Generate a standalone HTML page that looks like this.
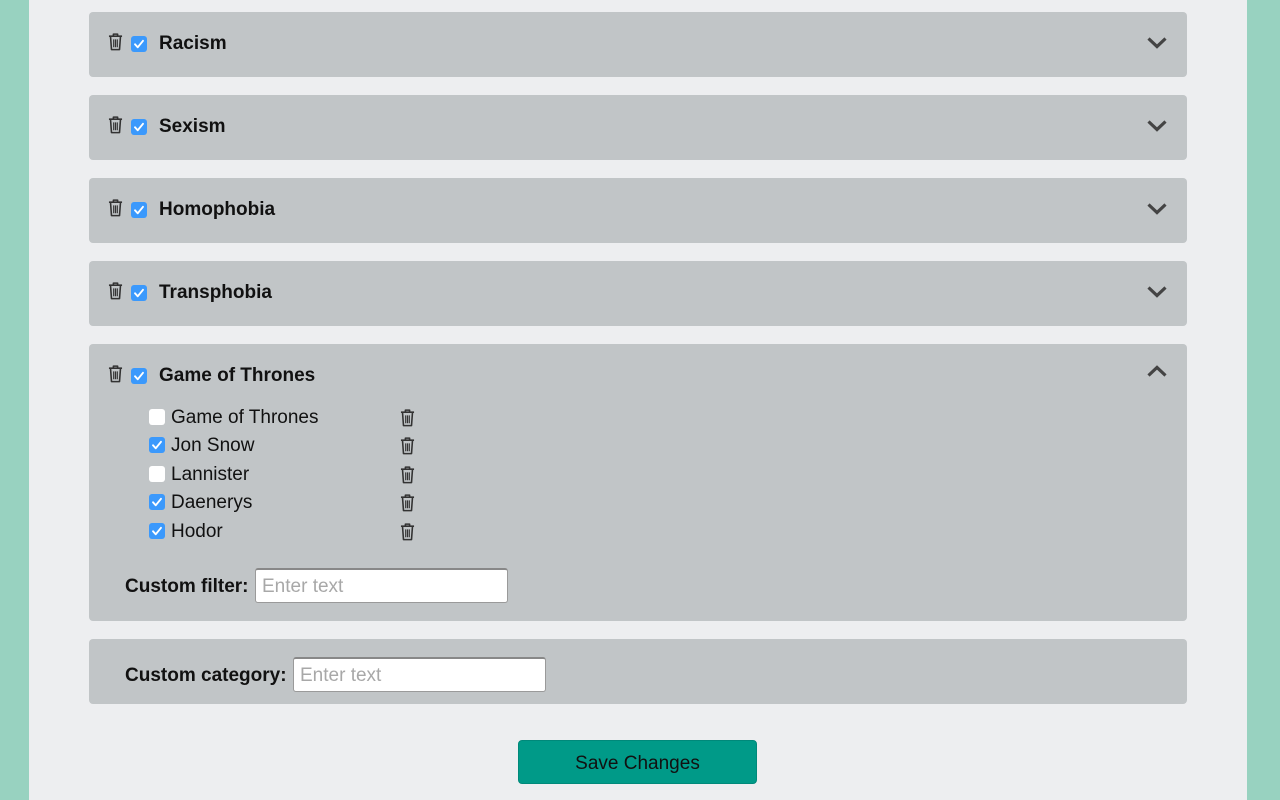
<!DOCTYPE html>
<html><head><meta charset="utf-8"><style>
*{box-sizing:border-box;margin:0;padding:0}
body{width:1280px;height:800px;background:#98d2c0;font-family:"Liberation Sans",Helvetica,Arial,sans-serif;position:relative;overflow:hidden;color:#111}
.page{position:absolute;left:29px;top:0;width:1218px;height:800px;background:#edeef0}
.panel{position:absolute;left:89px;width:1098px;background:#c1c5c7;border-radius:4px}
.t{position:absolute;font-weight:bold;font-size:19px;line-height:22px}
.trash{position:absolute;width:17px;height:19px}
.cb{position:absolute;width:16px;height:16px;border-radius:3px;background:#3b99fc}
.cb.off{background:#fff}
.cb svg{position:absolute;left:0;top:0}
.chev{position:absolute;right:19px;width:22px;height:13px}
.item{position:absolute;font-size:19px;line-height:22px}
.lbl{position:absolute;font-weight:bold;font-size:19px;line-height:22px}
.inp{position:absolute;height:35px;background:#fff;border:1px solid #9a9a9a;border-top:2px solid #888;border-radius:3px;font-size:19px;color:#a8a8a8;padding:6px 0 0 6px}
.btn{position:absolute;left:518px;top:740px;width:239px;height:44px;background:#009a88;border:1px solid #00897a;border-radius:4px;font-size:19px;text-align:center;line-height:44px;padding-top:1px;color:#111}
</style></head><body>
<div class="page"></div>
<svg width="0" height="0" style="position:absolute">
<defs>
<symbol id="tr" viewBox="0 0 16 18"><path d="M1.8 4h12.4M6 4V2h4v2M3.3 4.5l.9 12.2h7.6l.9-12.2" fill="none" stroke="#333" stroke-width="1.5" stroke-linejoin="round"/><path d="M6.3 7v7.5M8 7v7.5M9.7 7v7.5" stroke="#333" stroke-width="1.1"/></symbol>
<symbol id="ck" viewBox="0 0 16 16"><path d="M4 8.3l2.7 3L12 4.8" fill="none" stroke="#fff" stroke-width="1.9" stroke-linecap="round" stroke-linejoin="round"/></symbol>
<symbol id="dn" viewBox="0 0 22 13"><path d="M2.5 2.5L11 10.5l8.5-8" fill="none" stroke="#444" stroke-width="3.2"/></symbol>
<symbol id="up" viewBox="0 0 22 13"><path d="M2.5 10.5L11 2.5l8.5 8" fill="none" stroke="#444" stroke-width="3.2"/></symbol>
</defs></svg>

<div class="panel" style="top:12px;height:65px">
<svg class="trash" style="left:18px;top:20px"><use href="#tr"/></svg>
<div class="cb" style="left:42px;top:24px"><svg width="16" height="16"><use href="#ck"/></svg></div>
<div class="t" style="left:70px;top:21px">Racism</div>
<svg class="chev" style="top:24px"><use href="#dn"/></svg></div>

<div class="panel" style="top:95px;height:65px">
<svg class="trash" style="left:18px;top:20px"><use href="#tr"/></svg>
<div class="cb" style="left:42px;top:24px"><svg width="16" height="16"><use href="#ck"/></svg></div>
<div class="t" style="left:70px;top:21px">Sexism</div>
<svg class="chev" style="top:24px"><use href="#dn"/></svg></div>

<div class="panel" style="top:178px;height:65px">
<svg class="trash" style="left:18px;top:20px"><use href="#tr"/></svg>
<div class="cb" style="left:42px;top:24px"><svg width="16" height="16"><use href="#ck"/></svg></div>
<div class="t" style="left:70px;top:21px">Homophobia</div>
<svg class="chev" style="top:24px"><use href="#dn"/></svg></div>

<div class="panel" style="top:261px;height:65px">
<svg class="trash" style="left:18px;top:20px"><use href="#tr"/></svg>
<div class="cb" style="left:42px;top:24px"><svg width="16" height="16"><use href="#ck"/></svg></div>
<div class="t" style="left:70px;top:21px">Transphobia</div>
<svg class="chev" style="top:24px"><use href="#dn"/></svg></div>

<div class="panel" style="top:344px;height:277px">
<svg class="trash" style="left:18px;top:20px"><use href="#tr"/></svg>
<div class="cb" style="left:42px;top:24px"><svg width="16" height="16"><use href="#ck"/></svg></div>
<div class="t" style="left:70px;top:21px">Game of Thrones</div>
<svg class="chev" style="top:21px"><use href="#up"/></svg>

<div class="cb off" style="left:60px;top:65px"></div><div class="item" style="left:82px;top:63px">Game of Thrones</div><svg class="trash" style="left:310px;top:64px"><use href="#tr"/></svg>
<div class="cb" style="left:60px;top:93px"><svg width="16" height="16"><use href="#ck"/></svg></div><div class="item" style="left:82px;top:91px">Jon Snow</div><svg class="trash" style="left:310px;top:92px"><use href="#tr"/></svg>
<div class="cb off" style="left:60px;top:122px"></div><div class="item" style="left:82px;top:120px">Lannister</div><svg class="trash" style="left:310px;top:121px"><use href="#tr"/></svg>
<div class="cb" style="left:60px;top:150px"><svg width="16" height="16"><use href="#ck"/></svg></div><div class="item" style="left:82px;top:148px">Daenerys</div><svg class="trash" style="left:310px;top:149px"><use href="#tr"/></svg>
<div class="cb" style="left:60px;top:179px"><svg width="16" height="16"><use href="#ck"/></svg></div><div class="item" style="left:82px;top:177px">Hodor</div><svg class="trash" style="left:310px;top:178px"><use href="#tr"/></svg>

<div class="lbl" style="left:36px;top:232px">Custom filter:</div>
<div class="inp" style="left:166px;top:224px;width:253px">Enter text</div>
</div>

<div class="panel" style="top:639px;height:65px">
<div class="lbl" style="left:36px;top:26px">Custom category:</div>
<div class="inp" style="left:204px;top:18px;width:253px">Enter text</div>
</div>

<div class="btn">Save Changes</div>
</body></html>
